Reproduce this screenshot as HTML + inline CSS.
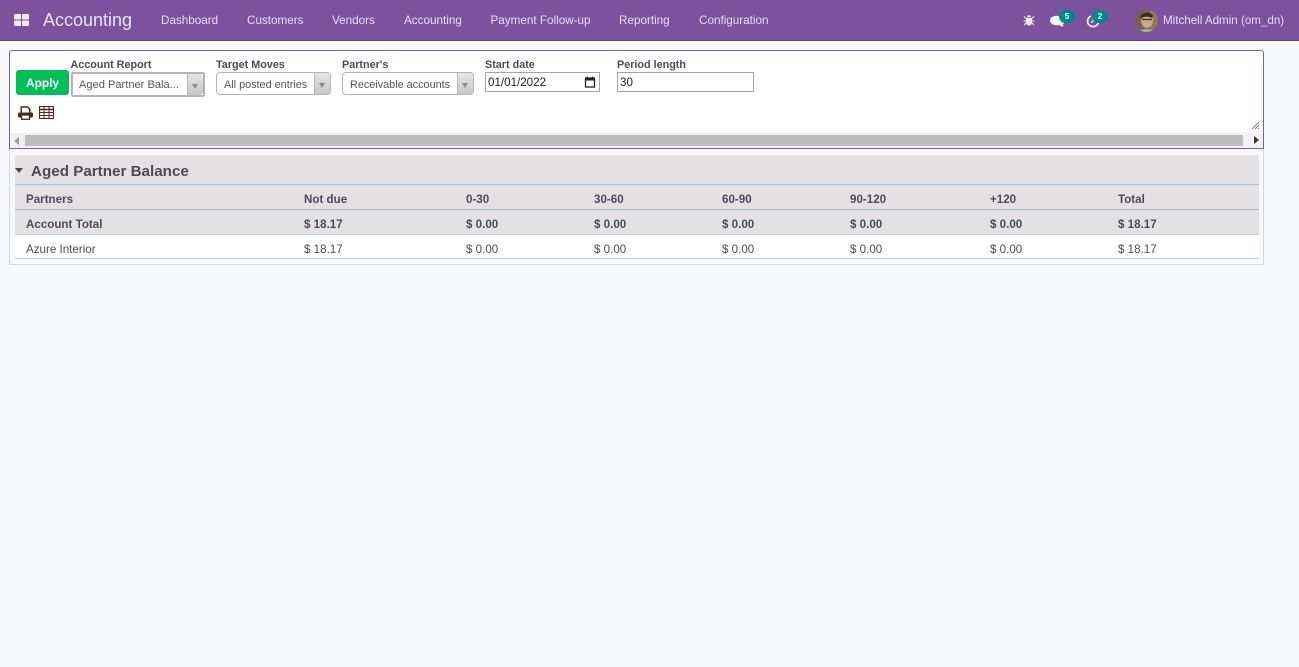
<!DOCTYPE html>
<html><head><meta charset="utf-8"><style>
*{box-sizing:border-box}
html,body{margin:0;padding:0;width:1299px;height:667px;overflow:hidden;background:#f8f9fa;font-family:"Liberation Sans",sans-serif;color:#4c4c4c}
.a{position:absolute;white-space:nowrap}
.nav{font-size:11.7px;color:#e6dff0;top:14px;line-height:14px}
.lbl{font-size:10.8px;font-weight:bold;color:#4c4c55;top:59px;line-height:13px}
.sel{height:23px;border:1px solid #b5b5b5;border-radius:4px;background:#fff;font-size:10.85px;color:#55555f;line-height:23px;padding-left:7px}
.sel i{position:absolute;right:0;top:0;bottom:0;width:16px;background:linear-gradient(#e4e4e4,#c8c8c8);border-left:1px solid #b5b5b5;border-radius:0 3px 3px 0}
.sel i:after{content:"";position:absolute;left:4px;top:10px;border:3px solid transparent;border-top:5px solid #888;border-bottom:0}
.inp{height:20px;border:1px solid #a5a5a5;background:#fff;font-size:11.6px;color:#222;line-height:19px;padding-left:2px}
.t{font-size:11.6px;line-height:14px;color:#4c4c55}
.b{font-weight:bold}
.row{position:absolute;left:15px;width:1244px}
.bdg{position:absolute;background:#00888a;color:#fff;font-size:8px;font-weight:bold;text-align:center;border-radius:8px;height:13px;width:16px;line-height:13px}
</style></head><body>
<div class="a" style="left:0;top:0;width:1299px;height:41px;background:#7c519d;border-bottom:1px solid #5f3d7d"></div>
<svg class="a" style="left:14px;top:13px" width="16" height="14"><rect x="0" y="1" width="7" height="5.5" rx="1" fill="#f2ecf6"/><rect x="8" y="1" width="7" height="5.5" rx="1" fill="#f2ecf6"/><rect x="0" y="7.5" width="7" height="5.5" rx="1" fill="#f2ecf6"/><rect x="8" y="7.5" width="7" height="5.5" rx="1" fill="#f2ecf6"/></svg>
<div class="a" style="left:43px;top:9px;font-size:18px;line-height:22px;color:#e9e2f0">Accounting</div>
<div class="a nav" style="left:161px">Dashboard</div>
<div class="a nav" style="left:247px">Customers</div>
<div class="a nav" style="left:332px">Vendors</div>
<div class="a nav" style="left:404px">Accounting</div>
<div class="a nav" style="left:490.500px">Payment Follow-up</div>
<div class="a nav" style="left:619px">Reporting</div>
<div class="a nav" style="left:699px">Configuration</div>
<svg class="a" style="left:1023px;top:14px" width="12" height="12" viewBox="0 0 12 12"><path d="M3 4h6v4.500a3 3 0 0 1-6 0z" fill="#f4eff7"/><path d="M4 3.200a2 2 0 0 1 4 0z" fill="#f4eff7"/><path d="M1 2.500l2 2M11 2.500L9 4.500M.5 7H3M11.500 7H9M1 11l2-2M11 11L9 9" stroke="#f4eff7" stroke-width="1"/></svg>
<svg class="a" style="left:1050px;top:15px" width="16" height="13" viewBox="0 0 16 13"><ellipse cx="6.500" cy="5.500" rx="6.500" ry="4.800" fill="#f6f2f8"/><path d="M9 10c2 1.500 3 1.500 5 1.500l-1.500-1.500c1-.8 1.500-2 1.500-3z" fill="#f6f2f8"/></svg>
<div class="bdg" style="left:1059px;top:10px">5</div>
<svg class="a" style="left:1086px;top:14px" width="14" height="14" viewBox="0 0 14 14"><path d="M5 2A5.500 5.500 0 1 0 12.500 8" fill="none" stroke="#f6f2f8" stroke-width="1.700"/><path d="M7 4v3.500l-2 1" fill="none" stroke="#f6f2f8" stroke-width="1.200"/></svg>
<div class="bdg" style="left:1092px;top:10px">2</div>
<svg class="a" style="left:1135px;top:9px" width="23" height="23" viewBox="0 0 23 23"><defs><clipPath id="c"><circle cx="11.500" cy="11.500" r="11.500"/></clipPath></defs><g clip-path="url(#c)"><rect width="23" height="23" fill="#77624a"/><rect x="15" width="8" height="23" fill="#8f7a52"/><ellipse cx="12" cy="11.500" rx="6" ry="7.500" fill="#c9a58e"/><path d="M5 8c2-5 11-6 13-1l-1 2c-4-2-8-2-11 1z" fill="#3a2c24"/><path d="M7 10.500h10" stroke="#333" stroke-width="1.300"/><path d="M3 23c2-4 15-4 17 0z" fill="#a9b09a"/></g></svg>
<div class="a nav" style="left:1163px;font-size:11.6px">Mitchell Admin (om_dn)</div>

<div class="a" style="left:9px;top:50px;width:1255px;height:99px;background:#fff;border:1px solid #7b5fa8;border-radius:3px 3px 0 0"></div>
<div class="a" style="left:16px;top:70px;width:53px;height:25px;background:#00bf58;border-radius:3px;color:#fff;font-size:11.900px;font-weight:bold;text-align:center;line-height:27px">Apply</div>
<div class="a lbl" style="left:70.500px">Account Report</div>
<div class="a sel" style="left:71px;top:72px;width:134px;height:25px;border:2px solid #b5b5b5;border-radius:2px;line-height:23px;padding-left:6px;font-size:11.100px">Aged Partner Bala...<i></i></div>
<div class="a lbl" style="left:216px">Target Moves</div>
<div class="a sel" style="left:216px;top:72px;width:115px;line-height:24px">All posted entries<i></i></div>
<div class="a lbl" style="left:342px">Partner's</div>
<div class="a sel" style="left:342px;top:72px;width:132px;line-height:24px">Receivable accounts<i></i></div>
<div class="a lbl" style="left:485px">Start date</div>
<div class="a inp" style="left:485px;top:72px;width:115px">01/01/2022
<svg style="position:absolute;right:3px;top:3px" width="12" height="12" viewBox="0 0 12 12"><rect x="1.500" y="2" width="9" height="9" fill="none" stroke="#222" stroke-width="1.300"/><rect x="1.500" y="2" width="9" height="2.500" fill="#222"/><path d="M3.500 .5v2M8.500 .5v2" stroke="#222"/></svg></div>
<div class="a lbl" style="left:617px">Period length</div>
<div class="a inp" style="left:617px;top:72px;width:137px">30</div>
<svg class="a" style="left:18px;top:106px" width="15" height="14" viewBox="0 0 15 14"><path d="M3.200 7V1h6.300l2.300 2.300V7" fill="none" stroke="#4d2b20" stroke-width="1.500"/><rect x="0" y="6.500" width="15" height="5" rx="1.200" fill="#4d2b20"/><rect x="3.500" y="9" width="8" height="4.300" fill="#fff" stroke="#4d2b20" stroke-width="1.300"/></svg>
<svg class="a" style="left:39px;top:106px" width="15" height="13" viewBox="0 0 15 13"><rect x=".5" y=".5" width="14" height="12" fill="none" stroke="#4d2b20" stroke-width="1.200"/><path d="M.5 3.500h14" stroke="#4d2b20" stroke-width="1.500"/><path d="M.5 6.500h14M.5 9.500h14M5 .5v12M10 .5v12" stroke="#4d2b20" stroke-width="1"/></svg>
<svg class="a" style="left:1251px;top:121px" width="9" height="9"><path d="M8 1L1 8M8 4L4 8M8 7L7 8" stroke="#777" stroke-width="1"/></svg>
<div class="a" style="left:10px;top:133px;width:1253px;height:15px;background:#f1f1f1"></div>
<div class="a" style="left:25px;top:135px;width:1218px;height:11px;background:#bdbdbd"></div>
<div class="a" style="left:14px;top:137px;border:4px solid transparent;border-right:5px solid #9a9a9a;border-left:0"></div>
<div class="a" style="left:1254px;top:136px;border:4px solid transparent;border-left:5px solid #333;border-right:0"></div>

<div class="a" style="left:9px;top:149px;width:1255px;height:116px;background:#f8f9fa;border:1px solid #d3d8dc;border-top:0"></div>
<div class="row" style="top:155px;height:29px;background:#e3e1e2"></div>
<div class="row" style="top:184px;height:1px;background:#adc0dc"></div>
<div class="row" style="top:185px;height:24px;background:#e3e1e2"></div>
<div class="row" style="top:209px;height:1px;background:#a9b3c9"></div>
<div class="row" style="top:210px;height:24px;background:#e3e1e2"></div>
<div class="row" style="top:234px;height:1px;background:#bccfe8"></div>
<div class="row" style="top:235px;height:23px;background:#fff"></div>
<div class="row" style="top:258px;height:1px;background:#bccfe8"></div>
<div class="a" style="left:15px;top:168px;border:4.500px solid transparent;border-top:5px solid #484850;border-bottom:0"></div>
<div class="a b" style="left:31px;top:163px;font-size:15.200px;line-height:18px;color:#4c4c55">Aged Partner Balance</div>

<div class="a t b" style="left:26px;top:193px">Partners</div>
<div class="a t b" style="left:304px;top:193px">Not due</div>
<div class="a t b" style="left:466px;top:193px">0-30</div>
<div class="a t b" style="left:594px;top:193px">30-60</div>
<div class="a t b" style="left:722px;top:193px">60-90</div>
<div class="a t b" style="left:850px;top:193px">90-120</div>
<div class="a t b" style="left:990px;top:193px">+120</div>
<div class="a t b" style="left:1118px;top:193px">Total</div>

<div class="a t b" style="left:26px;top:218px">Account Total</div>
<div class="a t b" style="left:304px;top:218px">$ 18.17</div>
<div class="a t b" style="left:466px;top:218px">$ 0.00</div>
<div class="a t b" style="left:594px;top:218px">$ 0.00</div>
<div class="a t b" style="left:722px;top:218px">$ 0.00</div>
<div class="a t b" style="left:850px;top:218px">$ 0.00</div>
<div class="a t b" style="left:990px;top:218px">$ 0.00</div>
<div class="a t b" style="left:1118px;top:218px">$ 18.17</div>

<div class="a t" style="left:26px;top:243px">Azure Interior</div>
<div class="a t" style="left:304px;top:243px">$ 18.17</div>
<div class="a t" style="left:466px;top:243px">$ 0.00</div>
<div class="a t" style="left:594px;top:243px">$ 0.00</div>
<div class="a t" style="left:722px;top:243px">$ 0.00</div>
<div class="a t" style="left:850px;top:243px">$ 0.00</div>
<div class="a t" style="left:990px;top:243px">$ 0.00</div>
<div class="a t" style="left:1118px;top:243px">$ 18.17</div>
</body></html>
